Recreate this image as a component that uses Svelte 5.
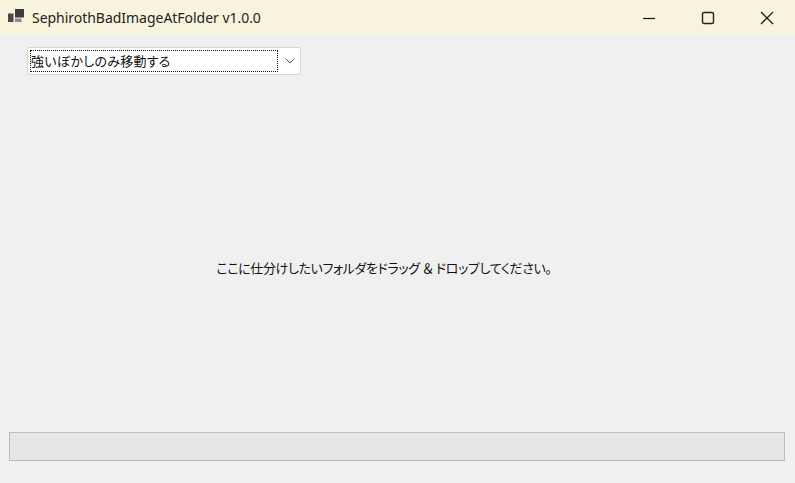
<script>
  const title = 'SephirothBadImageAtFolder v1.0.0';
  let mode = '強いぼかしのみ移動する';
</script>

<div class="window">
  <header class="titlebar">
    <svg class="app-icon" width="16" height="13" viewBox="0 0 16 13">
      <rect x="7" y="0" width="9" height="8.5" fill="#3c3c3c" />
      <rect x="0" y="4.5" width="5.5" height="8.5" fill="#484848" />
      <rect x="7" y="9.5" width="6.5" height="3.5" fill="#8a8a8a" />
    </svg>
    <span class="title">{title}</span>
    <div class="controls">
      <button aria-label="minimize">
        <svg width="14" height="14" viewBox="0 0 14 14"><path d="M1 7.5h12" stroke="#111" stroke-width="1.2" /></svg>
      </button>
      <button aria-label="maximize">
        <svg width="14" height="14" viewBox="0 0 14 14"><rect x="1.5" y="1.5" width="11" height="11" rx="1.5" fill="none" stroke="#222" stroke-width="1.4" /></svg>
      </button>
      <button aria-label="close">
        <svg width="14" height="14" viewBox="0 0 14 14"><path d="M1 1l12 12M13 1L1 13" stroke="#222" stroke-width="1.3" /></svg>
      </button>
    </div>
  </header>

  <main class="content">
    <div class="combo">
      <span class="combo-value">{mode}</span>
      <svg class="chevron" width="10" height="6" viewBox="0 0 10 6"><path d="M0.5 0.5L5 5l4.5-4.5" fill="none" stroke="#555" stroke-width="1" /></svg>
    </div>
    <p class="hint">ここに仕分けしたいフォルダをドラッグ<span class="amp">＆</span>ドロップしてください。</p>
    <div class="progress"></div>
  </main>
</div>

<style>
  :global(body) {
    background: #f0f0f0;
  }

  .window {
    display: flex;
    flex-direction: column;
    height: 483px;
    overflow: hidden;
    font-family: "Noto Sans CJK JP", "Noto Sans", sans-serif;
    color: #111;
  }

  .titlebar {
    display: flex;
    align-items: center;
    flex: 0 0 35px;
    padding-left: 8px;
    background: #f8f3dd;
  }

  .app-icon {
    margin-right: 8px;
    margin-top: -4px;
  }

  .title {
    font-family: "Noto Sans", sans-serif;
    font-size: 14px;
    letter-spacing: -0.03px;
    color: #222;
  }

  .controls {
    display: flex;
    margin-left: auto;
    margin-right: -1px;
  }

  .controls button {
    display: flex;
    align-items: center;
    justify-content: center;
    width: 59px;
    height: 33px;
    padding: 0;
    border: none;
    background: none;
  }

  .content {
    flex: 1;
    display: flex;
    flex-direction: column;
    padding: 12px 10px 22px 9px;
  }

  .combo {
    display: flex;
    align-items: center;
    justify-content: space-between;
    box-sizing: border-box;
    width: 274px;
    height: 28px;
    margin-left: 18px;
    padding: 0 5px 0 2px;
    border: 1px solid #d4d4d4;
    border-radius: 2px;
    background: #fff;
    font-size: 13px;
    letter-spacing: 0.25px;
    font-feature-settings: "palt";
  }

  .combo-value {
    box-sizing: border-box;
    width: 248px;
    height: 22px;
    line-height: 22px;
    outline: 1px dotted #111;
    outline-offset: -1px;
    padding-left: 1px;
  }

  .hint {
    flex: 1;
    display: flex;
    align-items: center;
    justify-content: center;
    margin: 0;
    padding: 28px 26px 0 0;
    font-size: 13px;
    letter-spacing: -0.38px;
    font-feature-settings: "palt";
  }

  .amp {
    padding: 0 3px;
  }

  .progress {
    box-sizing: border-box;
    height: 29px;
    border: 1px solid #bcbcbc;
    background: #e6e6e6;
  }
</style>
